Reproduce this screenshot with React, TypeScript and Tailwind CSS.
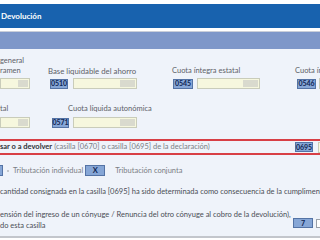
import React from 'react';

/**
 * Renta — bloque "Devolución" (vista recortada).
 * Casillas en azul, importes en campos crema, resultado en recuadro rojo.
 */

function Casilla({ code, className = '' }: { code: string; className?: string }) {
  return (
    <span
      className={
        'flex h-[10px] shrink-0 items-center justify-center border border-[#5473a5] bg-[#86a6d6] text-[7px] font-bold leading-none text-[#0e2553] ' +
        className
      }
    >
      {code}
    </span>
  );
}

function Importe({ width, small = false }: { width: string; small?: boolean }) {
  return (
    <div className={'flex h-[11px] shrink-0 justify-end border border-[#c9ccba] bg-[#f6f7de] p-px ' + width}>
      <div className={small ? 'h-full w-[10px] bg-[#d9dace]' : 'h-full w-[15px] bg-[#d9dace]'} />
    </div>
  );
}

export default function App() {
  return (
    <div className="flex h-[240px] w-[320px] flex-col overflow-hidden bg-white font-[Lato,sans-serif] text-[7.5px] text-[#5d6168]">
      {/* cabecera */}
      <div className="h-[4px] shrink-0" />
      <div className="flex h-[24px] shrink-0 items-center bg-[#1862ae] pl-px text-[8px] font-bold text-white">
        Devolución
      </div>
      <div className="h-[3px] shrink-0" />
      <div className="h-px shrink-0 bg-[#c9ced9]" />
      <div className="h-[17px] shrink-0 bg-[#7e97c9]" />

      {/* contenido */}
      <div className="flex h-[187px] shrink-0 flex-col bg-[#eff3fa] pt-[7px]">
        {/* fila 1 */}
        <div className="flex whitespace-nowrap leading-[10px]">
          <div className="flex w-[48px] shrink-0 flex-col">
            <span>general</span>
            <span>ramen</span>
            <div className="mt-[2px]">
              <Importe width="w-[30px]" small />
            </div>
          </div>
          <div className="flex w-[124px] shrink-0 flex-col justify-end">
            <span className="text-[7.8px]">Base liquidable del ahorro</span>
            <div className="mt-[2px] flex items-center gap-[5px] pl-[2px]">
              <Casilla code="0510" className="w-[18px]" />
              <Importe width="w-[64px]" />
            </div>
          </div>
          <div className="flex w-[123px] shrink-0 flex-col justify-end">
            <span>Cuota íntegra estatal</span>
            <div className="mt-[2px] flex items-center gap-[4px] pl-px">
              <Casilla code="0545" className="w-[20px]" />
              <Importe width="w-[63px]" />
            </div>
          </div>
          <div className="flex w-[80px] shrink-0 flex-col justify-end">
            <span>Cuota íntegra autonómica</span>
            <div className="mt-[2px] flex items-center gap-[3px] pl-[2px]">
              <Casilla code="0546" className="w-[19px]" />
              <Importe width="w-[63px]" />
            </div>
          </div>
        </div>

        {/* fila 2 */}
        <div className="mt-[15px] flex whitespace-nowrap leading-[10px]">
          <div className="flex w-[52px] shrink-0 flex-col">
            <span>tal</span>
            <div className="mt-[3px]">
              <Importe width="w-[30px]" small />
            </div>
          </div>
          <div className="flex w-[130px] shrink-0 flex-col">
            <span className="pl-[16px]">Cuota líquida autonómica</span>
            <div className="mt-[3px] flex items-center gap-[4px]">
              <Casilla code="0571" className="w-[17px]" />
              <Importe width="w-[64px]" />
            </div>
          </div>
        </div>

        {/* resultado */}
        <div className="mt-[11px] flex h-[16px] shrink-0 items-center whitespace-nowrap border-y-2 border-[#d83f45]">
          <div className="flex w-[295px] shrink-0 items-center">
            <span className="font-bold text-[#2f3237]">sar o a devolver</span>
            <span className="ml-[2px] text-[#7a7e85]">(casilla [0670] o casilla [0695] de la declaración)</span>
          </div>
          <Casilla code="0695" className="w-[18px]" />
          <div className="ml-[5px]">
            <Importe width="w-[60px]" />
          </div>
        </div>

        {/* tributación */}
        <div className="mt-[10px] flex h-[11px] shrink-0 items-center whitespace-nowrap text-[#7a7e85]">
          <span className="h-[11px] w-[3px] shrink-0 border-y border-r border-[#5473a5] bg-[#86a6d6]" />
          <span className="ml-[4px] h-[2px] w-[2px] shrink-0 bg-[#c4c7cc]" />
          <span className="ml-[4px] shrink-0">Tributación individual</span>
          <span className="ml-[2px] flex h-[11px] w-[20px] shrink-0 items-center justify-center border border-[#5473a5] bg-[#86a6d6] text-[7.5px] font-bold text-[#0e2553]">
            X
          </span>
          <span className="ml-[10px]">Tributación conjunta</span>
        </div>

        <div className="mt-[11px] whitespace-nowrap leading-[10px] text-[#4a4e55]">
          cantidad consignada en la casilla [0695] ha sido determinada como consecuencia de la cumplimentación
        </div>

        <div className="mt-[12px] flex items-end whitespace-nowrap leading-[11px] text-[#4a4e55]">
          <div className="flex w-[293px] shrink-0 flex-col">
            <span>ensión del ingreso de un cónyuge / Renuncia del otro cónyuge al cobro de la devolución),</span>
            <span>do esta casilla</span>
          </div>
          <span className="mb-[3px] flex h-[10px] w-[20px] shrink-0 items-center justify-center border border-[#5473a5] bg-[#86a6d6] text-[7px] font-bold leading-none text-[#0e2553]">
            7
          </span>
          <span className="mb-[3px] ml-[3px] h-[9px] w-[9px] shrink-0 border border-[#9aa0a8] bg-white" />
        </div>
      </div>

      <div className="h-[2px] shrink-0 bg-[#c3c6cc]" />
    </div>
  );
}
